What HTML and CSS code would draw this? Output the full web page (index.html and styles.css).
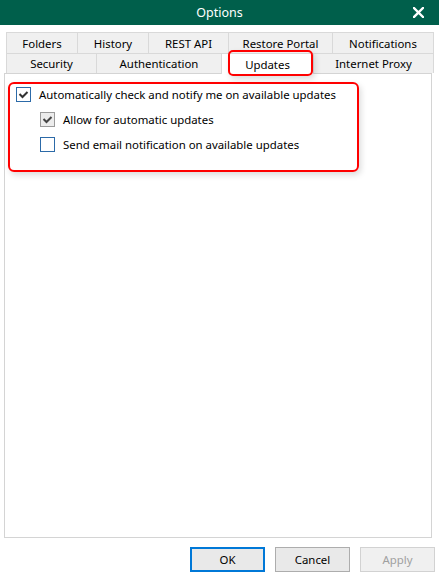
FILE: index.html
```html
<!DOCTYPE html>
<html lang="en">
<head>
    <meta charset="UTF-8">
    <meta name="viewport" content="width=device-width, initial-scale=1.0">
    <title>Options</title>
    <link rel="stylesheet" href="styles.css">
</head>
<body>
    <div class="dialog">
        <div class="titlebar">
            <span class="title">Options</span>
            <span class="close">
                <svg width="11" height="11" viewBox="0 0 11 11">
                    <path d="M1 1 L10 10 M10 1 L1 10" stroke="#fff" stroke-width="2.4" stroke-linecap="square"/>
                </svg>
            </span>
        </div>

        <div class="tabs">
            <div class="tab-row row-top">
                <div class="tab">Folders</div>
                <div class="tab">History</div>
                <div class="tab">REST API</div>
                <div class="tab">Restore Portal</div>
                <div class="tab last">Notifications</div>
            </div>
            <div class="tab-row row-bottom">
                <div class="tab">Security</div>
                <div class="tab">Authentication</div>
                <div class="tab selected">
                    Updates
                    <span class="callout tab-callout"></span>
                </div>
                <div class="tab last">Internet Proxy</div>
            </div>
        </div>

        <div class="panel">
            <div class="callout group">
                <label class="check-row">
                    <span class="box checked">
                        <svg width="13" height="13" viewBox="0 0 13 13"><path d="M2.5 6 L5.5 9 L10.5 4" fill="none" stroke="#333" stroke-width="2"/></svg>
                    </span>
                    Automatically check and notify me on available updates
                </label>
                <label class="check-row sub">
                    <span class="box checked disabled">
                        <svg width="13" height="13" viewBox="0 0 13 13"><path d="M2.5 6 L5.5 9 L10.5 4" fill="none" stroke="#444" stroke-width="2"/></svg>
                    </span>
                    Allow for automatic updates
                </label>
                <label class="check-row sub">
                    <span class="box"></span>
                    Send email notification on available updates
                </label>
            </div>
        </div>

        <div class="buttons">
            <button class="btn default">OK</button>
            <button class="btn">Cancel</button>
            <button class="btn" disabled>Apply</button>
        </div>
    </div>
</body>
</html>
```

FILE: styles.css
```css
html, body {
    margin: 0;
    padding: 0;
    background: #fff;
}

body {
    font-family: 'Noto Sans', 'Open Sans', sans-serif;
    font-size: 11.4px;
    color: #000;
}

.dialog {
    display: flex;
    flex-direction: column;
    height: 577px;
    width: 439px;
}

.titlebar {
    height: 25px;
    background-color: #005f4b;
    color: #fff;
    display: flex;
    align-items: center;
    justify-content: center;
    position: relative;
    flex-shrink: 0;
}

.title {
    font-size: 12.5px;
}

.close {
    position: absolute;
    right: 15px;
    top: 7px;
    line-height: 0;
}

.tabs {
    margin: 7px 5px 0 6px;
    flex-shrink: 0;
}

.tab-row {
    display: grid;
}

.row-top {
    grid-template-columns: 71px 71px 80px 104px 102px;
    height: 21px;
}

.row-bottom {
    grid-template-columns: 90px 125px 92px 121px;
    height: 20px;
}

.tab {
    background-color: #f0f0f0;
    border-top: 1px solid #d9d9d9;
    border-left: 1px solid #d9d9d9;
    display: flex;
    align-items: center;
    justify-content: center;
}

.tab.last {
    border-right: 1px solid #d9d9d9;
}

.tab.selected {
    background-color: #fff;
    border-right: 1px solid #d9d9d9;
    margin-bottom: -1px;
    margin-right: -1px;
    position: relative;
    z-index: 1;
}

.callout {
    border: 2px solid #ff0000;
    border-radius: 6px;
    box-shadow: 2px 3px 6px rgba(0, 0, 0, 0.14);
}

.tab-callout {
    position: absolute;
    left: 6px;
    top: -4px;
    width: 81px;
    height: 22px;
    border-radius: 5px;
}

.panel {
    flex: 1;
    margin: 0 7px 0 4px;
    border: 1px solid #d4d4d4;
    background: #fff;
    padding: 8px 0 0 3px;
}

.group {
    width: 341px;
    padding: 2px 0 18px 6px;
    display: flex;
    flex-direction: column;
    gap: 9px;
}

.check-row {
    display: flex;
    align-items: center;
    height: 16px;
    gap: 8px;
    white-space: nowrap;
}

.check-row.sub {
    padding-left: 24px;
}

.box {
    width: 13px;
    height: 13px;
    border: 1px solid #2c6aa8;
    background: #fff;
    flex-shrink: 0;
    line-height: 0;
}

.box.disabled {
    border-color: #9a9a9a;
    background: #ececec;
}

.buttons {
    display: flex;
    justify-content: flex-end;
    gap: 10px;
    padding: 9px 4px 5px 0;
    flex-shrink: 0;
}

.btn {
    width: 75px;
    height: 25px;
    font-family: 'Noto Sans', 'Open Sans', sans-serif;
    font-size: 11.4px;
    color: #000;
    background-color: #e9e9e9;
    border: 1px solid #adadad;
    padding: 0;
}

.btn.default {
    border: 2px solid #0078d7;
}

.btn:disabled {
    color: #a0a0a0;
    background-color: #f0f0f0;
    border-color: #d2d2d2;
}
```
